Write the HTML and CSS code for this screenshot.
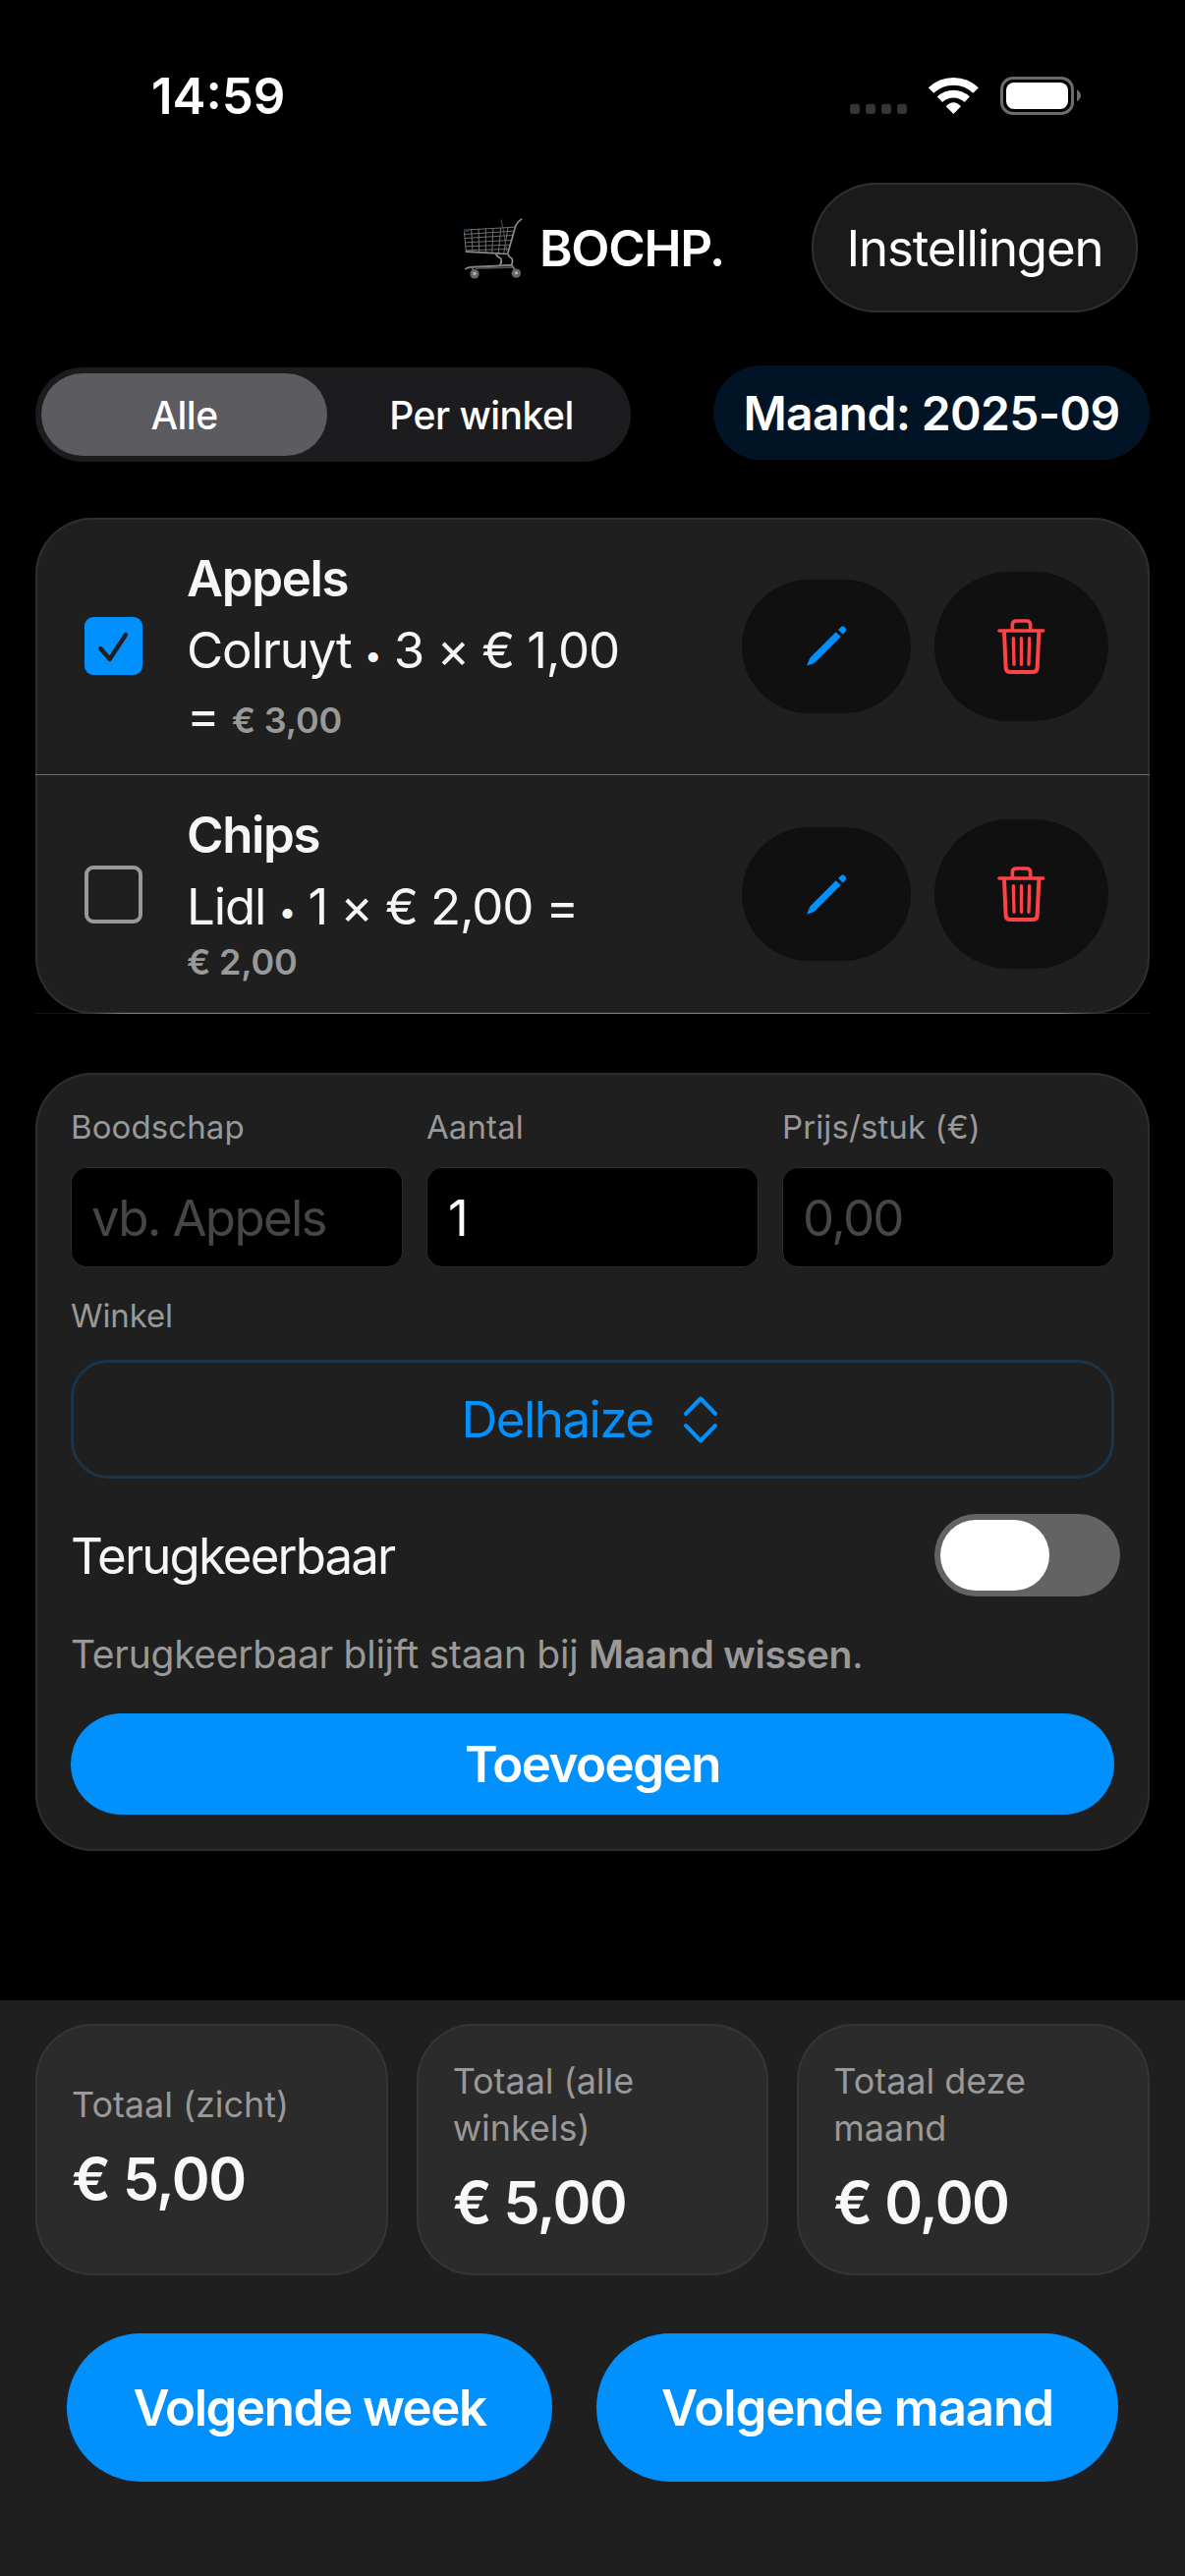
FILE: index.html
```html
<!DOCTYPE html>
<html lang="nl">
<head>
<meta charset="utf-8">
<title>BOCHP.</title>
<link rel="stylesheet" href="styles.css">
</head>
<body>
<svg class="defs" aria-hidden="true">
  <symbol id="pencil" viewBox="53 224 140 140">
    <path fill="currentColor" d="M151 252 L166 266 L88 344 Q84 348 79 349 L66 354 Q62 355 64 350 L69 338 Q70 333 74 329 Z"/>
    <path fill="currentColor" d="M158 245 L165 238 Q172 231 179 238 Q186 245 180 251 L173 259 Z"/>
  </symbol>
  <symbol id="trash" viewBox="638 204 160 180">
    <g fill="none" stroke="currentColor" stroke-linecap="round" stroke-linejoin="round">
      <path stroke-width="11" d="M650 246 H784 M690 244 V228 Q690 216 702 216 H733 Q745 216 745 228 V244"/>
      <path stroke-width="12" d="M665 250 L670 360 Q671 372 683 372 H753 Q765 372 766 360 L771 250"/>
      <path stroke-width="10" d="M693 269 L695 349 M717.500 269 V349 M742 269 L740 349"/>
    </g>
  </symbol>
</svg>

<header class="status">
  <span class="time">14:59</span>
  <svg class="indicators" viewBox="75 54 705 117">
    <g fill="#353535">
      <rect x="75" y="137" width="30" height="31" rx="10"/>
      <rect x="123" y="137" width="30" height="31" rx="10"/>
      <rect x="171" y="137" width="30" height="31" rx="10"/>
      <rect x="219" y="137" width="30" height="31" rx="10"/>
    </g>
    <path fill="none" stroke="#fff" stroke-width="23" d="M322.600 96.200 A98.500 98.500 0 0 1 459.400 96.200 M349.300 123.900 A60 60 0 0 1 432.700 123.900"/>
    <path fill="#fff" d="M391 168 L368 145 Q391 121 414 145 Z"/>
    <rect x="538.500" y="58.500" width="216" height="108" rx="34" fill="none" stroke="#6b6b6b" stroke-width="9"/>
    <rect x="552" y="72" width="189" height="81" rx="24" fill="#fff"/>
    <path fill="#6b6b6b" d="M768 94 Q780 101 780 112 Q780 123 768 130 Z"/>
  </svg>
</header>

<nav class="nav">
  <h1 class="title">
    <svg class="cart" viewBox="94 58 186 194">
      <g fill="none" stroke-linecap="round">
        <path stroke="#6f6f6f" stroke-width="3" d="M98 100 L253 91 M100 113 L249 103 M101 125 L246 116 M102 138 L243 131 M103 150 L239 145 M104 162 L235 158 M98 100 L104 166 M120 98 L124 167 M142 97 L144 168 M164 96 L164 169 M187 95 L183 170 M210 94 L203 171 M232 93 L219 172"/>
        <path stroke="#555" stroke-width="3" d="M211 69 L218 100 L228 164"/>
        <path stroke="#8a8a8a" stroke-width="5" d="M273 67 Q256 79 253 95 L231 173 L104 166"/>
        <path stroke="#929292" stroke-width="5" d="M196 175 Q202 184 210 187 Q214 196 208 206 M233 176 Q236 184 244 187 Q248 198 242 207 L249 216"/>
        <path stroke="#7d8280" stroke-width="6" d="M103 218 Q112 213 125 213 L244 207"/>
        <path stroke="#4c5250" stroke-width="5" d="M134 217 L244 214"/>
        <path stroke="#77706c" stroke-width="5" d="M122 214 L130 230 M245 210 L256 228"/>
      </g>
      <path fill="#163a55" d="M97 97 H112 V106 H97Z"/>
      <circle cx="130" cy="234" r="14" fill="#6b6663"/>
      <circle cx="130" cy="233" r="5" fill="#b8b1ac"/>
      <circle cx="257" cy="232" r="14" fill="#6b6663"/>
      <circle cx="257" cy="231" r="5" fill="#b8b1ac"/>
    </svg>
    <span>BOCHP.</span>
  </h1>
  <button class="settings">Instellingen</button>
</nav>

<div class="controls">
  <div class="segment">
    <span class="option selected">Alle</span>
    <span class="option">Per winkel</span>
  </div>
  <span class="month">Maand: 2025-09</span>
</div>

<section class="card list">
  <article class="item">
    <span class="check checked">
      <svg viewBox="0 0 177 177"><path d="M49 96 L77 129 L126 54" fill="none" stroke="#1f1f1f" stroke-width="13" stroke-linecap="round" stroke-linejoin="round"/></svg>
    </span>
    <div class="info">
      <strong class="name">Appels</strong>
      <div class="line">Colruyt <span class="dot">•</span> 3 × € 1,00</div>
      <div class="line rest">= <span class="sum">€ 3,00</span></div>
    </div>
    <button class="edit"><svg><use href="#pencil"/></svg></button>
    <button class="delete"><svg><use href="#trash"/></svg></button>
  </article>
  <article class="item">
    <span class="check"></span>
    <div class="info">
      <strong class="name">Chips</strong>
      <div class="line">Lidl <span class="dot">•</span> 1 × € 2,00 =</div>
      <div class="line below"><span class="sum">€ 2,00</span></div>
    </div>
    <button class="edit"><svg><use href="#pencil"/></svg></button>
    <button class="delete"><svg><use href="#trash"/></svg></button>
  </article>
</section>

<section class="card form">
  <div class="fields">
    <div class="field"><span class="label">Boodschap</span><span class="input hint-text">vb. Appels</span></div>
    <div class="field"><span class="label">Aantal</span><span class="input">1</span></div>
    <div class="field"><span class="label">Prijs/stuk (€)</span><span class="input hint-text">0,00</span></div>
  </div>
  <span class="label store-label">Winkel</span>
  <div class="select">
    <span>Delhaize</span>
    <svg class="chevrons" viewBox="0 0 36 50"><path d="M3 19 L18 3.500 L33 19 M3 31 L18 46.500 L33 31" fill="none" stroke="currentColor" stroke-width="4" stroke-linecap="round" stroke-linejoin="round"/></svg>
  </div>
  <div class="recurring">
    <span>Terugkeerbaar</span>
    <span class="toggle"><span class="knob"></span></span>
  </div>
  <p class="note">Terugkeerbaar blijft staan bij <b>Maand wissen</b>.</p>
  <button class="add">Toevoegen</button>
</section>

<footer class="footer">
  <div class="totals">
    <div class="total"><span class="caption">Totaal (zicht)</span><strong>€ 5,00</strong></div>
    <div class="total"><span class="caption">Totaal (alle<br>winkels)</span><strong>€ 5,00</strong></div>
    <div class="total"><span class="caption">Totaal deze<br>maand</span><strong>€ 0,00</strong></div>
  </div>
  <div class="actions">
    <button class="week">Volgende week</button>
    <button class="next-month">Volgende maand</button>
  </div>
</footer>
</body>
</html>
```
FILE: styles.css
```css
* { box-sizing: border-box; }

body {
  margin: 0;
  width: 1206px;
  height: 2622px;
  display: flex;
  flex-direction: column;
  background: #000;
  color: #fff;
  font-family: Inter, "Liberation Sans", sans-serif;
  font-size: 51px;
  letter-spacing: -1.5px;
  white-space: nowrap;
  overflow: hidden;
}

button {
  border: 0;
  padding: 0;
  color: inherit;
  font: inherit;
  letter-spacing: inherit;
  border-radius: 999px;
}

svg { display: block; flex: none; }
.defs { position: absolute; width: 0; height: 0; }

/* status bar */
.status {
  height: 186px;
  padding: 9px 106px 0 154px;
  display: flex;
  align-items: center;
  justify-content: space-between;
}
.time { font-weight: 600; letter-spacing: 0; }
.indicators { width: 235px; height: 39px; }

/* navigation */
.nav {
  height: 132px;
  padding-right: 48px;
  display: flex;
  align-items: center;
  justify-content: flex-end;
}
.title {
  width: 267px;
  margin: 0 88px 0 0;
  display: flex;
  align-items: center;
  gap: 16px;
  font-size: 51px;
  font-weight: 600;
  letter-spacing: -1.3px;
}
.cart { width: 62px; height: 65px; }
.settings {
  width: 332px;
  height: 132px;
  background: #1a1a1a;
  box-shadow: inset 0 0 0 2px #303030;
  letter-spacing: -1.17px;
}

/* view switch and month */
.controls {
  height: 96px;
  margin-top: 54px;
  padding: 0 36px;
  display: flex;
  justify-content: space-between;
}
.segment {
  width: 606px;
  height: 96px;
  margin-top: 2px;
  padding: 6px;
  display: grid;
  grid-template-columns: 291px 1fr;
  border-radius: 48px;
  background: #1c1c1e;
  font-size: 39px;
  font-weight: 500;
  letter-spacing: -0.5px;
}
.option {
  display: grid;
  place-items: center;
  border-radius: 42px;
}
.option.selected { background: #5b5b60; }
.option:not(.selected) { padding-left: 11px; }
.month {
  width: 444px;
  display: grid;
  place-items: center;
  border-radius: 48px;
  background: #001425;
  font-size: 48px;
  font-weight: 600;
  letter-spacing: -0.68px;
}

/* cards */
.card {
  margin: 0 36px;
  border-radius: 58px;
  background: #1f1f1f;
  box-shadow: inset 0 0 0 2px #2e2e2e;
  color: #f6f6f6;
}

.list {
  position: relative;
  height: 505px;
  margin-top: 59px;
}
.list::after {
  content: "";
  position: absolute;
  left: 0;
  right: 0;
  bottom: 0;
  height: 1px;
  background: linear-gradient(90deg, #161616 40px, #7a7a7a 90px, #7a7a7a calc(100% - 90px), #161616 calc(100% - 40px));
}
.item {
  height: 262px;
  padding: 0 42px 0 50px;
  display: flex;
  align-items: center;
  border-bottom: 1px solid #6f6f6f;
}
.item + .item { height: 243px; padding-bottom: 1px; border-bottom: 0; }

.check {
  width: 59px;
  height: 59px;
  border: 4px solid #999;
  border-radius: 9px;
}
.check.checked { border: 0; background: #0091ff; }
.info {
  flex: 1;
  align-self: flex-start;
  padding: 25px 0 0 45px;
}
.item + .item .info { padding-top: 24px; }
.name {
  display: block;
  font-weight: 600;
  line-height: 73px;
  letter-spacing: -1.35px;
}
.line { height: 73px; line-height: 73px; letter-spacing: -1.15px; }
.line.rest { height: 59px; line-height: 59px; }
.line.below { height: 41px; line-height: 41px; font-size: 36px; }
.dot { font-size: 32px; line-height: 0; vertical-align: 2px; }
.sum {
  color: #999;
  font-size: 36px;
  font-weight: 600;
  letter-spacing: -0.25px;
}
.edit, .delete {
  display: grid;
  place-items: center;
  background: #101010;
}
.edit { width: 172px; height: 136px; margin-right: 24px; color: #0091ff; }
.edit svg { width: 46.7px; height: 46.7px; }
.delete { width: 177px; height: 152px; color: #ff4245; }
.delete svg { width: 53.3px; height: 60px; }

/* new item form */
.form {
  height: 792px;
  margin-top: 60px;
  padding: 36px 36px 0;
  display: flex;
  flex-direction: column;
}
.fields {
  display: grid;
  grid-template-columns: repeat(3, 1fr);
  gap: 24px;
}
.label {
  display: block;
  height: 40px;
  line-height: 39px;
  color: #999;
  font-size: 33px;
  letter-spacing: 0.1px;
}
.input {
  height: 102px;
  margin-top: 20px;
  padding-left: 22px;
  display: flex;
  align-items: center;
  border-radius: 16px;
  background: #000;
  box-shadow: inset 0 0 0 1px #2d2d2d;
  color: #fff;
}
.input.hint-text { padding-left: 21px; color: #464648; letter-spacing: -1.7px; }
.store-label { margin-top: 30px; letter-spacing: -0.1px; }
.select {
  height: 121px;
  margin-top: 24px;
  padding-right: 6px;
  display: flex;
  align-items: center;
  justify-content: center;
  gap: 30px;
  border: 3px solid #1b3448;
  border-radius: 38px;
  color: #0091ff;
}
.chevrons { width: 36px; height: 50px; }
.recurring {
  height: 84px;
  margin: 36px -6px 0 0;
  display: flex;
  align-items: center;
  justify-content: space-between;
  letter-spacing: -1.88px;
}
.toggle {
  width: 189px;
  height: 84px;
  padding: 6px;
  border-radius: 42px;
  background: #636363;
}
.knob {
  display: block;
  width: 111px;
  height: 72px;
  border-radius: 36px;
  background: #fff;
}
.note {
  height: 47px;
  margin: 36px 0 0;
  line-height: 46px;
  color: #999;
  font-size: 39px;
  letter-spacing: -0.28px;
}
.note b { font-weight: 600; }
.add {
  height: 103px;
  margin-top: 36px;
  background: #0091ff;
  color: #fff;
  font-weight: 600;
}

/* totals and actions */
.footer {
  flex: 1;
  margin-top: 152px;
  padding: 24px 36px 0;
  background: #1f1f1f;
}
.totals {
  height: 256px;
  display: grid;
  grid-template-columns: repeat(3, 1fr);
  gap: 29px;
}
.total {
  padding-left: 37px;
  display: flex;
  flex-direction: column;
  justify-content: center;
  gap: 10px;
  border-radius: 58px;
  background: #2b2b2b;
  box-shadow: inset 0 0 0 2px #353535;
}
.caption {
  color: #999;
  font-size: 36px;
  line-height: 48px;
  letter-spacing: -0.05px;
}
.total strong {
  color: #f8f8f8;
  font-size: 59px;
  font-weight: 600;
  line-height: 83px;
  letter-spacing: -1.5px;
}
.actions {
  height: 151px;
  margin: 59px 32px 0;
  display: grid;
  grid-template-columns: 494px 531px;
  gap: 45px;
  font-weight: 600;
}
.actions button { background: #0091ff; color: #fff; }
.week { letter-spacing: -1.45px; }
.next-month { letter-spacing: -1.1px; }
```
